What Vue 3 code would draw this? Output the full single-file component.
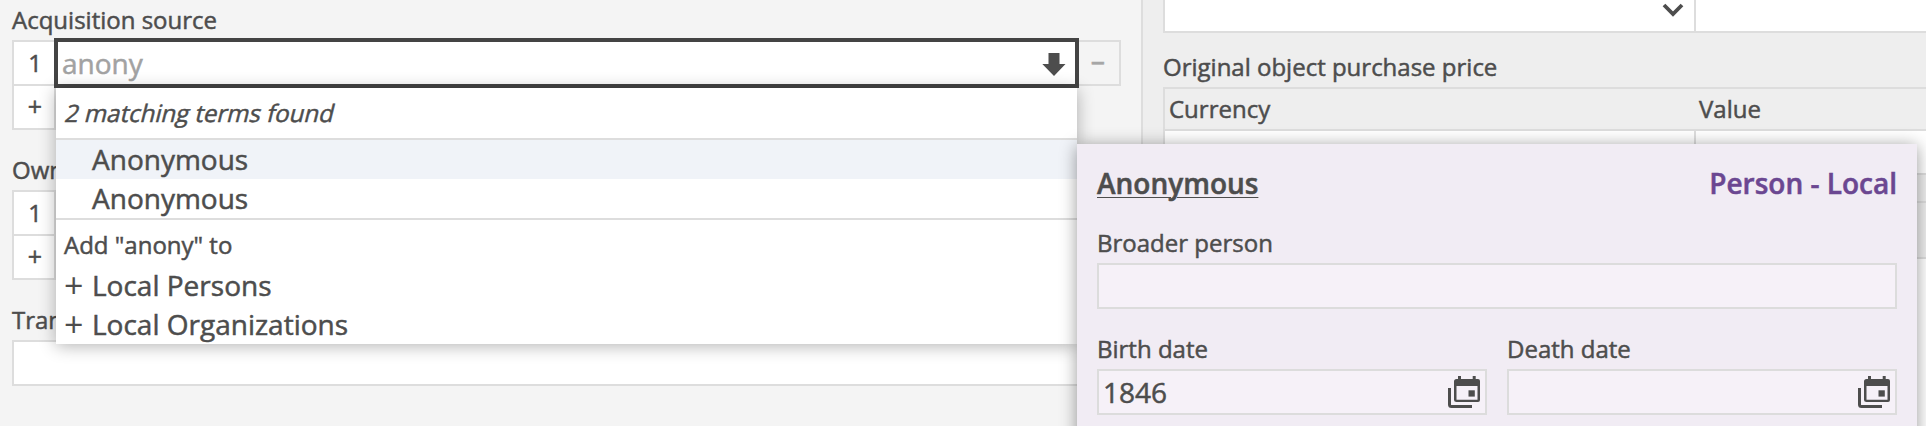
<script setup>
const groups = [
  { label: 'Acquisition source', active: true },
  { label: 'Owner', active: false },
]
const matches = ['Anonymous', 'Anonymous']
const sources = ['Local Persons', 'Local Organizations']
const dates = [
  { label: 'Birth date', value: '1846' },
  { label: 'Death date', value: '' },
]
</script>

<template>
  <div class="page">
    <section class="left">
      <div v-for="g in groups" :key="g.label" class="field">
        <div class="label">{{ g.label }}</div>
        <div class="rep">
          <div class="row">
            <div class="num">1</div>
            <div v-if="g.active" class="input">
              <span class="query">anony</span>
              <svg class="arrow" width="24" height="24" viewBox="0 0 24 24">
                <path d="M6.5 0h11v11h6L12 23 .3 11h6.2z" fill="#4d4d4d" />
              </svg>
              <div class="menu">
                <div class="found"><span>2 matching terms found</span></div>
                <div class="matches">
                  <div v-for="(m, i) in matches" :key="i" class="item" :class="{ hot: i === 0 }">{{ m }}</div>
                </div>
                <div class="add">Add "anony" to</div>
                <div v-for="s in sources" :key="s" class="item plus">{{ s }}</div>
              </div>
            </div>
            <div v-else class="plain"></div>
            <div class="remove">−</div>
          </div>
          <div class="more">+</div>
        </div>
      </div>
      <div class="field">
        <div class="label">Transfer</div>
        <div class="box"></div>
      </div>
    </section>

    <section class="right">
      <div class="cells top">
        <div class="cell first">
          <svg class="chev" width="22" height="14" viewBox="0 0 22 14">
            <path d="M2 2l9 9 9-9" fill="none" stroke="#4d4d4d" stroke-width="3.8" />
          </svg>
        </div>
        <div class="cell"></div>
      </div>
      <div class="label price">Original object purchase price</div>
      <div class="cells head">
        <div class="cell first">Currency</div>
        <div class="cell">Value</div>
      </div>
      <div class="cells body">
        <div class="cell first"></div>
        <div class="cell"></div>
      </div>
      <div class="next"></div>
      <div class="last"></div>
    </section>

    <aside class="card">
      <header class="title">
        <span class="name">Anonymous</span>
        <span class="kind">Person - Local</span>
      </header>
      <div class="label broader">Broader person</div>
      <div class="box"></div>
      <div class="dates">
        <div v-for="d in dates" :key="d.label" class="date">
          <div class="label">{{ d.label }}</div>
          <div class="box">
            <span>{{ d.value }}</span>
            <svg width="32" height="32" viewBox="0 0 32 32">
              <path d="M1.5 12v16.500q0 2 2 2H24" fill="none" stroke="#4d4d4d" stroke-width="3" />
              <path fill="#4d4d4d" fill-rule="evenodd" d="M10 0h3v3h11.700V0h3v3H30q2 0 2 2v19q0 2-2 2H8.500q-2.500 0-2.500-2V5.500Q6 3 8.500 3H10zM8.500 10v13.700h21V10z" />
              <path fill="#4d4d4d" d="M20.500 14.300h6.300v6.300h-6.300z" />
            </svg>
          </div>
        </div>
      </div>
    </aside>
  </div>
</template>

<style>
body { margin: 0; overflow: hidden; }
</style>

<style scoped>
.page {
  position: relative;
  display: flex;
  width: 1926px;
  height: 426px;
  overflow: hidden;
  background: #f4f4f4;
  color: #4d4d4d;
  font-family: "Open Sans", "Noto Sans", sans-serif;
  font-size: 24px;
  -webkit-text-stroke-width: .5px;
}
.page * { box-sizing: border-box; }
.left {
  width: 1143px;
  flex: none;
  padding: 0 20px 0 12px;
  border-right: 2px solid #ddd;
}
.field { height: 150px; }
.label { height: 40px; line-height: 40px; white-space: nowrap; }
.row { display: flex; height: 46px; }
.num, .more {
  width: 44px;
  height: 46px;
  padding-left: 2px;
  border: 2px solid #ddd;
  background: #fff;
  line-height: 42px;
  text-align: center;
}
.more { margin-top: -2px; font-size: 25px; line-height: 41px; }
.num { margin-right: -2px; flex: none; }
.input {
  position: relative;
  z-index: 2;
  display: flex;
  flex: 1;
  height: 50px;
  margin-top: -2px;
  align-items: center;
  justify-content: space-between;
  padding: 0 9px 0 4px;
  border: 4px solid #444;
  background: #fff;
}
.query { color: #a2a2a2; font-size: 28px; line-height: 42px; }
.arrow { margin-top: 3px; }
.remove {
  width: 42px;
  padding-right: 2px;
  border: 2px solid #ddd;
  border-left: 0;
  color: #a6a6a6;
  font-size: 25px;
  font-weight: 600;
  text-align: center;
  line-height: 40px;
}
.plain { flex: 1; border: 2px solid #ddd; background: #fff; }
.menu {
  position: absolute;
  top: 46px;
  left: -2px;
  width: 1021px;
  height: 256px;
  background: #fff;
  box-shadow: 0 2px 16px rgba(0, 0, 0, .3);
}
.found {
  height: 52px;
  padding-left: 10px;
  border-bottom: 2px solid #ddd;
  line-height: 49px;
}
.found span { display: inline-block; transform: skewX(-14deg); }
.matches { height: 80px; border-bottom: 2px solid #ddd; }
.item { height: 39px; padding-left: 36px; font-size: 28px; line-height: 38px; white-space: nowrap; }
.hot { background: #f0f3f8; }
.add { height: 46px; padding-left: 8px; line-height: 49px; }
.plus { position: relative; }
.plus::before { content: "+"; position: absolute; left: 8px; top: 0; font-size: 34px; -webkit-text-stroke-width: 0; }
.box { height: 46px; border: 2px solid #ddd; background: #fff; }
.right { flex: 1; padding-left: 20px; background: #eee; }
.cells { display: flex; border: 2px solid #ddd; border-right: 0; }
.cell { flex: 1; padding-left: 4px; }
.head .cell { padding-left: 3px; }
.head .first { padding-left: 4px; }
.first { flex: 0 0 531px; }
.top { height: 33px; border-top: 0; background: #fff; }
.top .first, .body .first { flex-basis: 531px; border-right: 2px solid #ddd; }
.top .first { display: flex; justify-content: flex-end; padding: 3px 10px 0 0; }
.price { height: 54px; padding-top: 14px; }
.head { height: 44px; line-height: 39px; }
.body { height: 44px; border-top: 0; background: #fff; }
.next { height: 28px; border-bottom: 2px solid #ddd; margin-bottom: 54px; }
.last { height: 180px; border-top: 2px solid #ddd; background: #fff; }
.card {
  position: absolute;
  z-index: 4;
  top: 144px;
  left: 1077px;
  width: 840px;
  height: 320px;
  padding: 20px;
  background: #f1ecf4;
  box-shadow: 0 2px 16px rgba(0, 0, 0, .4);
}
.title { display: flex; justify-content: space-between; height: 59px; font-size: 28px; font-weight: 600; line-height: 38px; }
.name { text-decoration: underline; text-decoration-thickness: 1px; text-underline-offset: 3px; }
.kind { color: #6b4791; }
.card .box { background: #f6f1f8; border-color: #dcdcdc; }
.dates { display: flex; gap: 20px; margin-top: 20px; }
.date { flex: 1; }
.date .box { display: flex; align-items: center; justify-content: space-between; padding: 0 5px 0 4px; font-size: 28px; }
</style>
